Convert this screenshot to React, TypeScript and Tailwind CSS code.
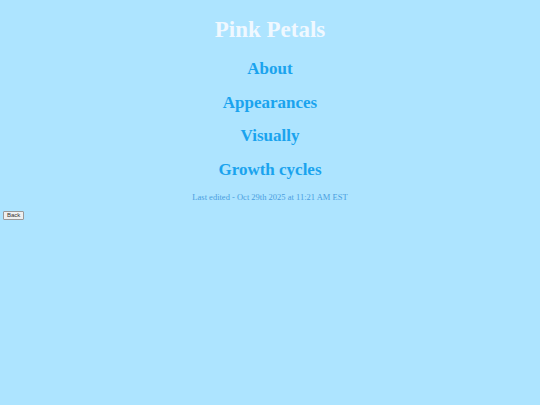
export default function App() {
  const sections = ["About", "Appearances", "Visually", "Growth cycles"];
  return (
    <div className="min-h-screen w-full bg-[#ade4ff] font-['Liberation_Serif',serif]">
      <div className="flex flex-col items-center pt-[16px]">
        <h1 className="text-[23px] leading-[28px] font-bold text-[#f0f8ff]">Pink Petals</h1>
        <div className="flex flex-col items-center gap-[12.6px] mt-[14px]">
          {sections.map((s) => (
            <a key={s} className="text-[17px] leading-[21px] font-bold text-[#1aa3ee] cursor-pointer">
              {s}
            </a>
          ))}
        </div>
        <p className="mt-[12px] text-[8.5px] leading-[10px] text-[#4a9ee0]">
          Last edited - Oct 29th 2025 at 11:21 AM EST
        </p>
      </div>
      <div className="flex mt-[9px] pl-[3px]">
        <button className="h-[9px] px-[3px] flex items-center text-[6px] leading-[7px] bg-[#efefef] border border-[#999] rounded-[1px] font-['Liberation_Sans',sans-serif] text-[#333]">
          Back
        </button>
      </div>
    </div>
  );
}
